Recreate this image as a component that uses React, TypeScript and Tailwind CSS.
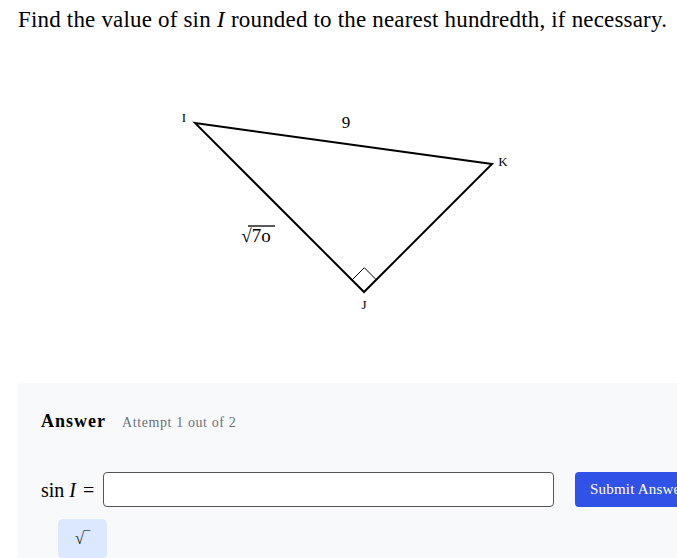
import React from "react";

export default function App() {
  return (
    <div className="w-[677px] h-[558px] overflow-hidden bg-white text-[#111] font-['Liberation_Serif',serif]">
      <div className="pl-[18px] pt-[4px]">
        <h1 className="text-[23px] leading-[30px] tracking-[0.18px] font-normal text-black whitespace-nowrap">
          Find the value of sin <span className="italic text-[24px]">I</span> rounded to the nearest hundredth, if necessary.
        </h1>
        <div className="h-[348px] relative">
          <svg width="659" height="348" viewBox="18 34 659 348" className="block">
            <polygon points="195,122 492,163 364,291" fill="none" stroke="#000" strokeWidth="2" strokeLinejoin="miter" />
            <polyline points="352.5,278.5 364.3,266.7 376,278.5" fill="none" stroke="#000" strokeWidth="1" />
            <text x="184" y="121" fontSize="13" textAnchor="middle" fontFamily="Liberation Serif, serif">I</text>
            <text x="346" y="127" fontSize="17" textAnchor="middle" fontFamily="Liberation Serif, serif">9</text>
            <text x="503" y="165" fontSize="13" textAnchor="middle" fontFamily="Liberation Serif, serif">K</text>
            <text x="364" y="308" fontSize="13" textAnchor="middle" fontFamily="Liberation Serif, serif">J</text>
            <text x="256" y="241" fontSize="19" textAnchor="middle" fontFamily="Liberation Serif, serif">√7o</text>
            <line x1="248" y1="225" x2="275" y2="225" stroke="#000" strokeWidth="1.3" />
          </svg>
        </div>
        <div className="w-[700px] h-[200px] bg-[#f8f9fb] rounded-[4px] pl-[23px] pt-[25px]">
          <div className="flex items-baseline gap-[16px]">
            <span className="text-[18px] tracking-[1px] font-bold text-black">Answer</span>
            <span className="text-[14px] tracking-[0.6px] text-[#6b7280]">Attempt 1 out of 2</span>
          </div>
          <div className="flex items-center mt-[37px] h-[35px]">
            <span className="w-[62px] text-[20px] text-black whitespace-nowrap">
              sin <span className="italic">I</span> <span className="ml-[2px]">=</span>
            </span>
            <input className="w-[451px] h-[35px] bg-white border border-[#555] rounded-[4px]" />
            <button className="ml-[21px] h-[35px] pl-[15px] pr-[15px] bg-[#3052e6] rounded-[4px] text-white text-[15px] tracking-[0.2px] whitespace-nowrap">
              Submit Answer
            </button>
          </div>
          <div className="mt-[12px] ml-[17px] w-[49px] h-[40px] bg-[#dbe8fd] rounded-[5px] flex items-center justify-center">
            <span className="text-[17px] text-[#333]">√‾</span>
          </div>
        </div>
      </div>
    </div>
  );
}
